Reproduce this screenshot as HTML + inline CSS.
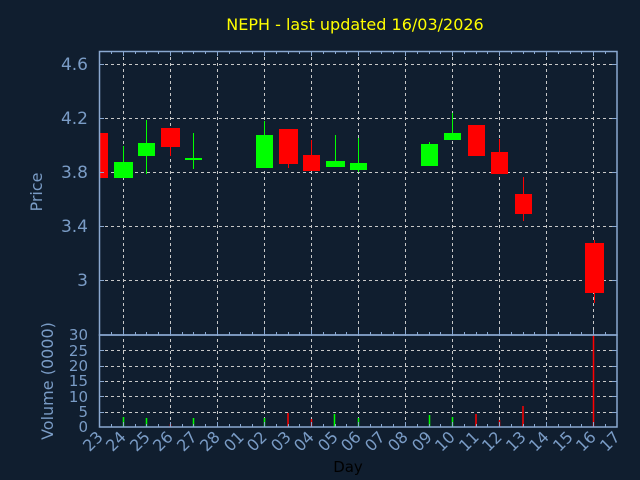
<!DOCTYPE html>
<html><head><style>
html,body{margin:0;padding:0;background:#101e2f;}
svg{display:block;font-family:"DejaVu Sans","Liberation Sans",sans-serif;}
</style></head><body>
<svg width="640" height="480" viewBox="0 0 640 480" xmlns="http://www.w3.org/2000/svg">
<rect width="640" height="480" fill="#101e2f"/>
<text x="355" y="30" fill="#ffff00" font-size="16" text-anchor="middle">NEPH - last updated 16/03/2026</text>
<g stroke="#c8c8c8" stroke-width="1" stroke-dasharray="3,3">
<line x1="99" y1="64.5" x2="617" y2="64.5"/>
<line x1="99" y1="118.5" x2="617" y2="118.5"/>
<line x1="99" y1="172.5" x2="617" y2="172.5"/>
<line x1="99" y1="226.5" x2="617" y2="226.5"/>
<line x1="99" y1="280.5" x2="617" y2="280.5"/>
<line x1="99" y1="350.5" x2="617" y2="350.5"/>
<line x1="99" y1="366.5" x2="617" y2="366.5"/>
<line x1="99" y1="381.5" x2="617" y2="381.5"/>
<line x1="99" y1="396.5" x2="617" y2="396.5"/>
<line x1="99" y1="412.5" x2="617" y2="412.5"/>
<g id="vg">
<line x1="123.5" y1="51" x2="123.5" y2="427"/>
<line x1="170.5" y1="51" x2="170.5" y2="427"/>
<line x1="217.5" y1="51" x2="217.5" y2="427"/>
<line x1="264.5" y1="51" x2="264.5" y2="427"/>
<line x1="311.5" y1="51" x2="311.5" y2="427"/>
<line x1="358.5" y1="51" x2="358.5" y2="427"/>
<line x1="405.5" y1="51" x2="405.5" y2="427"/>
<line x1="452.5" y1="51" x2="452.5" y2="427"/>
<line x1="499.5" y1="51" x2="499.5" y2="427"/>
<line x1="546.5" y1="51" x2="546.5" y2="427"/>
<line x1="593.5" y1="51" x2="593.5" y2="427"/>
</g>
</g>
<!-- candles -->
<g>
<rect x="99" y="133" width="9" height="45" fill="#ff0000"/>
<line x1="123.5" y1="146" x2="123.5" y2="162" stroke="#00ff00"/>
<rect x="114" y="162" width="19" height="16" fill="#00ff00"/>
<line x1="146.5" y1="120" x2="146.5" y2="174" stroke="#00ff00"/>
<rect x="138" y="143" width="17" height="13" fill="#00ff00"/>
<line x1="170.5" y1="147" x2="170.5" y2="156" stroke="#ff0000"/>
<rect x="161" y="128" width="19" height="19" fill="#ff0000"/>
<line x1="193.5" y1="133" x2="193.5" y2="169" stroke="#00ff00"/>
<rect x="185" y="158" width="17" height="2" fill="#00ff00"/>
<line x1="264.5" y1="121" x2="264.5" y2="135" stroke="#00ff00"/>
<rect x="256" y="135" width="17" height="33" fill="#00ff00"/>
<line x1="288.5" y1="164" x2="288.5" y2="168" stroke="#ff0000"/>
<rect x="279" y="129" width="19" height="35" fill="#ff0000"/>
<line x1="311.5" y1="140" x2="311.5" y2="155" stroke="#ff0000"/>
<rect x="303" y="155" width="17" height="16" fill="#ff0000"/>
<line x1="335.5" y1="135" x2="335.5" y2="161" stroke="#00ff00"/>
<rect x="326" y="161" width="19" height="6" fill="#00ff00"/>
<line x1="358.5" y1="138" x2="358.5" y2="172" stroke="#00ff00"/>
<rect x="350" y="163" width="17" height="7" fill="#00ff00"/>
<line x1="429.5" y1="142" x2="429.5" y2="166" stroke="#00ff00"/>
<rect x="421" y="144" width="17" height="22" fill="#00ff00"/>
<line x1="452.5" y1="113" x2="452.5" y2="140" stroke="#00ff00"/>
<rect x="444" y="133" width="17" height="7" fill="#00ff00"/>
<rect x="468" y="125" width="17" height="31" fill="#ff0000"/>
<line x1="499.5" y1="139" x2="499.5" y2="152" stroke="#ff0000"/>
<rect x="491" y="152" width="17" height="22" fill="#ff0000"/>
<line x1="523.5" y1="177" x2="523.5" y2="221" stroke="#ff0000"/>
<rect x="515" y="194" width="17" height="20" fill="#ff0000"/>
<line x1="594.5" y1="240" x2="594.5" y2="303" stroke="#ff0000"/>
<rect x="585" y="243" width="19" height="50" fill="#ff0000"/>
</g>
<!-- volume bars -->
<g stroke-width="1.5">
<line x1="123.5" y1="427" x2="123.5" y2="417" stroke="#00ff00"/>
<line x1="146.5" y1="427" x2="146.5" y2="418" stroke="#00ff00"/>
<line x1="170.5" y1="427" x2="170.5" y2="424" stroke="#ff0000"/>
<line x1="193.5" y1="427" x2="193.5" y2="418" stroke="#00ff00"/>
<line x1="264.5" y1="427" x2="264.5" y2="418" stroke="#00ff00"/>
<line x1="288" y1="427" x2="288" y2="413" stroke="#ff0000"/>
<line x1="311.5" y1="427" x2="311.5" y2="419" stroke="#ff0000"/>
<line x1="334.5" y1="427" x2="334.5" y2="414" stroke="#00ff00"/>
<line x1="358.5" y1="427" x2="358.5" y2="418" stroke="#00ff00"/>
<line x1="429.5" y1="427" x2="429.5" y2="415" stroke="#00ff00"/>
<line x1="452.5" y1="427" x2="452.5" y2="417" stroke="#00ff00"/>
<line x1="476" y1="427" x2="476" y2="414" stroke="#ff0000"/>
<line x1="499.5" y1="427" x2="499.5" y2="420" stroke="#ff0000"/>
<line x1="523" y1="427" x2="523" y2="406" stroke="#ff0000"/>
<line x1="593.5" y1="427" x2="593.5" y2="335" stroke="#ff0000"/>
</g>
<!-- axes -->
<g stroke="#8aa8d0" stroke-width="1.5" fill="none">
<rect x="99.5" y="51.5" width="517.5" height="283.5"/>
<rect x="99.5" y="335" width="517.5" height="92"/>
</g>
<g stroke="#8aa8d0" stroke-width="1">
<path d="M99 64.5h5M99 118.5h5M99 172.5h5M99 226.5h5M99 280.5h5M612 64.5h5M612 118.5h5M612 172.5h5M612 226.5h5M612 280.5h5M99 350.5h5M99 366.5h5M99 381.5h5M99 396.5h5M99 412.5h5M612 350.5h5M612 366.5h5M612 381.5h5M612 396.5h5M612 412.5h5"/>
<path d="M111.5 51v3M123.5 51v5M135.5 51v3M146.5 51v3M158.5 51v3M170.5 51v5M182.5 51v3M193.5 51v3M205.5 51v3M217.5 51v5M229.5 51v3M240.5 51v3M252.5 51v3M264.5 51v5M276.5 51v3M288.5 51v3M299.5 51v3M311.5 51v5M323.5 51v3M335.5 51v3M346.5 51v3M358.5 51v5M370.5 51v3M381.5 51v3M393.5 51v3M405.5 51v5M417.5 51v3M429.5 51v3M440.5 51v3M452.5 51v5M464.5 51v3M476.5 51v3M487.5 51v3M499.5 51v5M511.5 51v3M523.5 51v3M534.5 51v3M546.5 51v5M558.5 51v3M570.5 51v3M581.5 51v3M593.5 51v5M605.5 51v3"/>
<path d="M111.5 335v-3M123.5 335v-5M135.5 335v-3M146.5 335v-3M158.5 335v-3M170.5 335v-5M182.5 335v-3M193.5 335v-3M205.5 335v-3M217.5 335v-5M229.5 335v-3M240.5 335v-3M252.5 335v-3M264.5 335v-5M276.5 335v-3M288.5 335v-3M299.5 335v-3M311.5 335v-5M323.5 335v-3M335.5 335v-3M346.5 335v-3M358.5 335v-5M370.5 335v-3M381.5 335v-3M393.5 335v-3M405.5 335v-5M417.5 335v-3M429.5 335v-3M440.5 335v-3M452.5 335v-5M464.5 335v-3M476.5 335v-3M487.5 335v-3M499.5 335v-5M511.5 335v-3M523.5 335v-3M534.5 335v-3M546.5 335v-5M558.5 335v-3M570.5 335v-3M581.5 335v-3M593.5 335v-5M605.5 335v-3"/>
<path d="M111.5 427v-3M123.5 427v-5M135.5 427v-3M146.5 427v-3M158.5 427v-3M170.5 427v-5M182.5 427v-3M193.5 427v-3M205.5 427v-3M217.5 427v-5M229.5 427v-3M240.5 427v-3M252.5 427v-3M264.5 427v-5M276.5 427v-3M288.5 427v-3M299.5 427v-3M311.5 427v-5M323.5 427v-3M335.5 427v-3M346.5 427v-3M358.5 427v-5M370.5 427v-3M381.5 427v-3M393.5 427v-3M405.5 427v-5M417.5 427v-3M429.5 427v-3M440.5 427v-3M452.5 427v-5M464.5 427v-3M476.5 427v-3M487.5 427v-3M499.5 427v-5M511.5 427v-3M523.5 427v-3M534.5 427v-3M546.5 427v-5M558.5 427v-3M570.5 427v-3M581.5 427v-3M593.5 427v-5M605.5 427v-3"/>
</g>
<g fill="#7a9cc6" font-size="17" text-anchor="end">
<text x="88" y="70">4.6</text>
<text x="88" y="124">4.2</text>
<text x="88" y="178">3.8</text>
<text x="88" y="232">3.4</text>
<text x="88" y="286">3</text>
</g>
<g fill="#7a9cc6" font-size="15" text-anchor="end">
<text x="88" y="340">30</text>
<text x="88" y="356">25</text>
<text x="88" y="371">20</text>
<text x="88" y="386">15</text>
<text x="88" y="402">10</text>
<text x="88" y="417">5</text>
<text x="88" y="432">0</text>
</g>
<text transform="translate(42,192) rotate(-90)" fill="#7a9cc6" font-size="16" text-anchor="middle">Price</text>
<text transform="translate(53,381) rotate(-90)" fill="#7a9cc6" font-size="16" text-anchor="middle">Volume (0000)</text>
<g fill="#7a9cc6" font-size="16" text-anchor="end">
<text transform="translate(104,438) rotate(-45)">23</text>
<text transform="translate(127,438) rotate(-45)">24</text>
<text transform="translate(151,438) rotate(-45)">25</text>
<text transform="translate(174,438) rotate(-45)">26</text>
<text transform="translate(198,438) rotate(-45)">27</text>
<text transform="translate(221,438) rotate(-45)">28</text>
<text transform="translate(245,438) rotate(-45)">01</text>
<text transform="translate(268,438) rotate(-45)">02</text>
<text transform="translate(292,438) rotate(-45)">03</text>
<text transform="translate(315,438) rotate(-45)">04</text>
<text transform="translate(339,438) rotate(-45)">05</text>
<text transform="translate(362,438) rotate(-45)">06</text>
<text transform="translate(386,438) rotate(-45)">07</text>
<text transform="translate(409,438) rotate(-45)">08</text>
<text transform="translate(433,438) rotate(-45)">09</text>
<text transform="translate(456,438) rotate(-45)">10</text>
<text transform="translate(480,438) rotate(-45)">11</text>
<text transform="translate(503,438) rotate(-45)">12</text>
<text transform="translate(527,438) rotate(-45)">13</text>
<text transform="translate(550,438) rotate(-45)">14</text>
<text transform="translate(574,438) rotate(-45)">15</text>
<text transform="translate(597,438) rotate(-45)">16</text>
<text transform="translate(621,438) rotate(-45)">17</text>
</g>
<text x="348" y="472" fill="#000000" font-size="15" text-anchor="middle">Day</text>
</svg>
</body></html>
